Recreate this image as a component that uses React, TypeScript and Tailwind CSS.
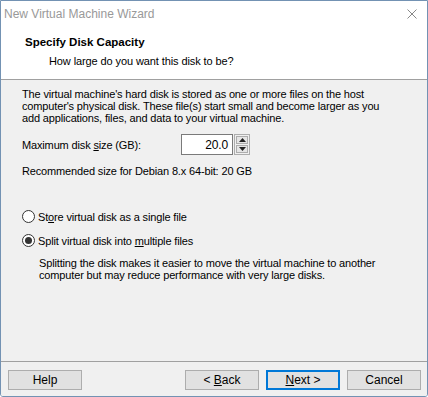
import React from 'react'

const font = { fontFamily: '"Liberation Sans", Arial, sans-serif' }

function Btn({ children, primary }: { children: React.ReactNode; primary?: boolean }) {
  return (
    <div
      className={
        'w-[74px] h-[20px] flex items-center justify-center bg-[#e1e1e1] text-[12px] text-black ' +
        (primary ? 'border-2 border-[#0078d7]' : 'border border-[#adadad]')
      }
    >
      <span className="whitespace-pre">{children}</span>
    </div>
  )
}

function Radio({ checked }: { checked?: boolean }) {
  return (
    <div className="w-[13px] h-[13px] rounded-full border border-[#333] bg-white flex items-center justify-center shrink-0">
      {checked && <div className="w-[7px] h-[7px] rounded-full bg-[#333]" />}
    </div>
  )
}

export default function App() {
  return (
    <div
      className="w-[428px] h-[397px] bg-white border border-[#7392b3] flex flex-col overflow-hidden rounded-b-[3px]"
      style={font}
    >
      {/* title + header */}
      <div className="h-[79px] bg-white border-b border-[#a0a0a0] flex flex-col">
        <div className="h-[25px] flex items-center justify-between pl-[3px] pr-[10px]">
          <span className="text-[12px] text-[#999]">New Virtual Machine Wizard</span>
          <svg width="10" height="10" viewBox="0 0 10 10">
            <path d="M0.5 0.5 L9.5 9.5 M9.5 0.5 L0.5 9.5" stroke="#888" strokeWidth="1" />
          </svg>
        </div>
        <div className="pl-[24px] pt-[8px] text-[11.5px] font-bold text-black leading-[16px]">Specify Disk Capacity</div>
        <div className="pl-[48px] pt-[3px] text-[11px] tracking-[-0.1px] text-black leading-[16px]">
          How large do you want this disk to be?
        </div>
      </div>

      {/* body */}
      <div className="flex-1 bg-[#f0f0f0] pl-[21px] pr-[8px] pt-[8px] text-[11px] tracking-[-0.15px] text-black leading-[12px]">
        <p>
          The virtual machine's hard disk is stored as one or more files on the host
          <br />
          computer's physical disk. These file(s) start small and become larger as you
          <br />
          add applications, files, and data to your virtual machine.
        </p>
        <div className="mt-[10px] flex items-center">
          <span className="w-[159px]">
            Maximum disk <u>s</u>ize (GB):
          </span>
          <div className="flex h-[21px]">
            <div className="w-[52px] h-[21px] bg-white border border-[#7a7a7a] flex items-center justify-end pr-[4px] text-[12px]">
              20.0
            </div>
            <div className="w-[16px] h-[21px] flex flex-col ml-[1px] border border-[#adadad] bg-[#f0f0f0] p-[1px] gap-[1px]">
              <div className="flex-1 border border-[#adadad] bg-[#e5e5e5] flex items-center justify-center">
                <svg width="7" height="4" viewBox="0 0 7 4">
                  <path d="M0 4 L3.5 0 L7 4 Z" fill="#222" />
                </svg>
              </div>
              <div className="flex-1 border border-[#adadad] bg-[#e5e5e5] flex items-center justify-center">
                <svg width="7" height="4" viewBox="0 0 7 4">
                  <path d="M0 0 L3.5 4 L7 0 Z" fill="#222" />
                </svg>
              </div>
            </div>
          </div>
        </div>
        <div className="mt-[10px]">Recommended size for Debian 8.x 64-bit: 20 GB</div>

        <div className="mt-[33px] flex items-center gap-[3px]">
          <Radio />
          <span>
            St<u>o</u>re virtual disk as a single file
          </span>
        </div>
        <div className="mt-[11px] flex items-center gap-[3px]">
          <Radio checked />
          <span>
            Split virtual disk into <u>m</u>ultiple files
          </span>
        </div>
        <p className="mt-[10px] pl-[17px]">
          Splitting the disk makes it easier to move the virtual machine to another
          <br />
          computer but may reduce performance with very large disks.
        </p>
      </div>

      {/* footer */}
      <div className="h-[35px] bg-[#f0f0f0] border-t border-[#a0a0a0] flex items-start pt-[8px] pl-[7px] pr-[6px]">
        <Btn>Help</Btn>
        <div className="flex-1" />
        <div className="flex gap-[7px]">
          <Btn>
            {'< '}
            <u>B</u>ack
          </Btn>
          <Btn primary>
            <u>N</u>ext {'>'}
          </Btn>
          <Btn>Cancel</Btn>
        </div>
      </div>
    </div>
  )
}
